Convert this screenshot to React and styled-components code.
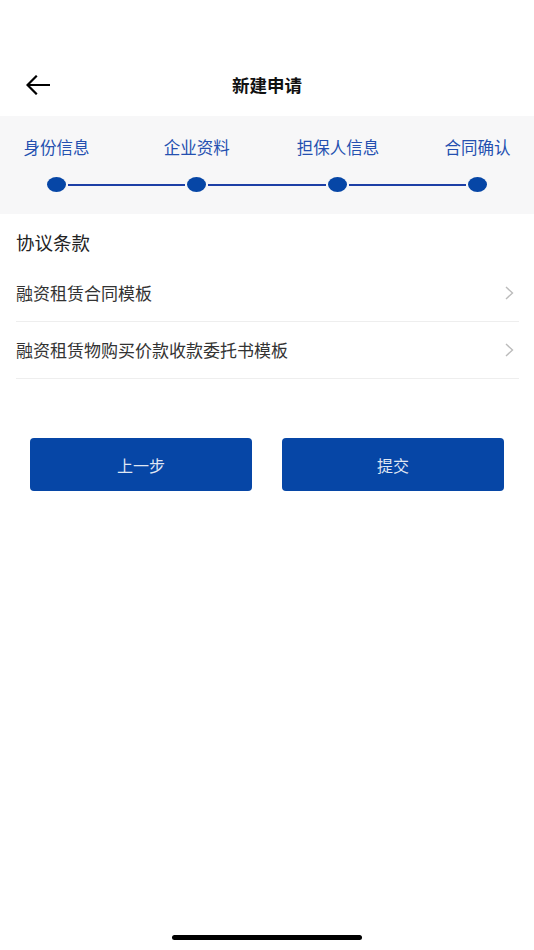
import React from "react";
import styled, { createGlobalStyle } from "styled-components";

const colors = {
  primary: "#0646a6",
  stepText: "#2450b0",
  band: "#f7f7f8",
  text: "#222222",
  rowText: "#333333",
  divider: "#eeeeee",
  chevron: "#bbbbbb",
};

const steps = ["身份信息", "企业资料", "担保人信息", "合同确认"];

const agreements = ["融资租赁合同模板", "融资租赁物购买价款收款委托书模板"];

const BackArrow = () => (
  <svg width="24" height="20" viewBox="0 0 24 20" fill="none">
    <path
      d="M23 10H2M10 1.5L1.5 10L10 18.5"
      stroke="#000"
      strokeWidth="2.2"
      strokeLinecap="square"
    />
  </svg>
);

const Chevron = () => (
  <svg width="9" height="14" viewBox="0 0 9 14" fill="none">
    <path d="M1 1L7.5 7L1 13" stroke={colors.chevron} strokeWidth="1.4" />
  </svg>
);

const App = () => {
  return (
    <Page>
      <GlobalStyle />
      <StatusSpace />
      <NavBar>
        <BackButton>
          <BackArrow />
        </BackButton>
        <Title>新建申请</Title>
      </NavBar>
      <StepBand>
        <LabelRow>
          {steps.map((s) => (
            <StepLabel key={s}>{s}</StepLabel>
          ))}
        </LabelRow>
        <Track>
          {steps.map((s, i) => (
            <React.Fragment key={s}>
              {i > 0 && <Connector />}
              <Dot />
            </React.Fragment>
          ))}
        </Track>
      </StepBand>
      <Section>
        <SectionTitle>协议条款</SectionTitle>
        {agreements.map((title) => (
          <Row key={title}>
            <RowText>{title}</RowText>
            <Chevron />
          </Row>
        ))}
      </Section>
      <Actions>
        <ActionButton>上一步</ActionButton>
        <ActionButton>提交</ActionButton>
      </Actions>
      <HomeBar />
    </Page>
  );
};

export default App;

const GlobalStyle = createGlobalStyle`
  html, body {
    margin: 0;
    padding: 0;
    background: #fff;
  }
  body {
    font-family: "Noto Sans CJK SC", "Noto Sans", sans-serif;
  }
  * {
    box-sizing: border-box;
  }
`;

const Page = styled.div`
  width: 534px;
  min-height: 950px;
  display: flex;
  flex-direction: column;
  background: #fff;
`;

const StatusSpace = styled.div`
  height: 54px;
`;

const NavBar = styled.header`
  height: 62px;
  display: flex;
  align-items: center;
  justify-content: center;
  position: relative;
`;

const BackButton = styled.button`
  position: absolute;
  left: 26px;
  top: 21px;
  display: flex;
  padding: 0;
  border: none;
  background: transparent;
  cursor: pointer;
`;

const Title = styled.h1`
  margin: 0;
  font-size: 17.5px;
  font-weight: 700;
  color: #111;
  line-height: 24px;
`;

const StepBand = styled.div`
  background: ${colors.band};
  padding: 20px 0 22px;
  display: flex;
  flex-direction: column;
  gap: 19px;
`;

const LabelRow = styled.div`
  display: flex;
  justify-content: space-between;
  padding: 0 16px 0 16px;
`;

const StepLabel = styled.span`
  width: 81px;
  text-align: center;
  white-space: nowrap;
  font-size: 16.5px;
  line-height: 22px;
  color: ${colors.stepText};
`;

const Track = styled.div`
  display: flex;
  align-items: center;
  padding: 0 47px 0 46.5px;
  height: 15px;
`;

const Dot = styled.span`
  width: 19px;
  height: 15px;
  border-radius: 50%;
  background: ${colors.primary};
  flex-shrink: 0;
`;

const Connector = styled.span`
  flex: 1;
  height: 2px;
  margin: 0 2px;
  background: #1d3fa6;
`;

const Section = styled.section`
  display: flex;
  flex-direction: column;
  padding: 15px 15px 0 16px;
`;

const SectionTitle = styled.h2`
  margin: 0 0 10px;
  font-size: 18.5px;
  font-weight: 400;
  line-height: 26px;
  color: ${colors.text};
`;

const Row = styled.div`
  height: 57px;
  display: flex;
  align-items: center;
  justify-content: space-between;
  padding-right: 5px;
  border-bottom: 1px solid ${colors.divider};
`;

const RowText = styled.span`
  font-size: 17px;
  color: ${colors.rowText};
  line-height: 24px;
`;

const Actions = styled.div`
  display: flex;
  gap: 30px;
  padding: 59px 30px 0;
`;

const ActionButton = styled.button`
  flex: 1;
  height: 53px;
  border: none;
  border-radius: 4px;
  background: ${colors.primary};
  color: rgba(255, 255, 255, 0.88);
  font-family: inherit;
  font-size: 16px;
  cursor: pointer;
`;

const HomeBar = styled.div`
  width: 190px;
  height: 5px;
  border-radius: 3px;
  background: #000;
  margin: auto auto 10px;
`;
